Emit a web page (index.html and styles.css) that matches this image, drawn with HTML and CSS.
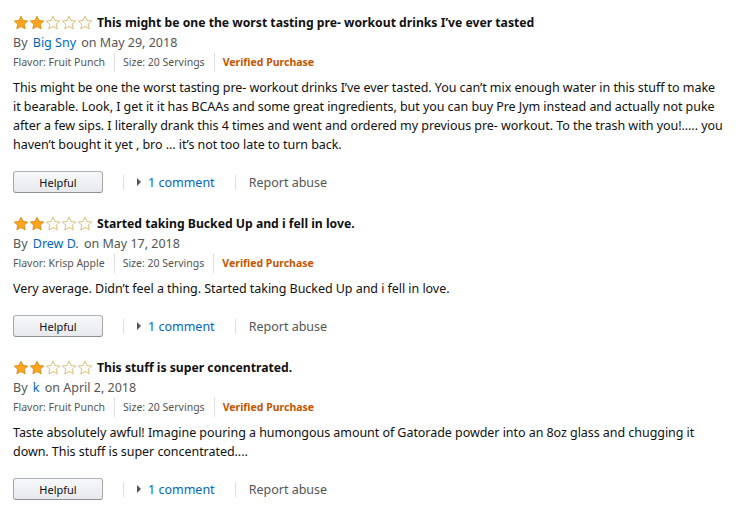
FILE: index.html
```html
<!DOCTYPE html>
<html lang="en">
<head>
  <meta charset="UTF-8">
  <title>Reviews</title>
  <link rel="stylesheet" href="styles.css">
</head>
<body>
  <div class="reviews">

    <div class="review">
      <div class="review-title">
        <span class="stars">
          <svg class="star full" viewBox="0 0 16 16"><path d="M8 1.2l2 4.3 4.7.5-3.5 3.2 1 4.6L8 11.5l-4.2 2.3 1-4.6L1.3 6l4.7-.5z"/></svg>
          <svg class="star full" viewBox="0 0 16 16"><path d="M8 1.2l2 4.3 4.7.5-3.5 3.2 1 4.6L8 11.5l-4.2 2.3 1-4.6L1.3 6l4.7-.5z"/></svg>
          <svg class="star" viewBox="0 0 16 16"><path d="M8 1.2l2 4.3 4.7.5-3.5 3.2 1 4.6L8 11.5l-4.2 2.3 1-4.6L1.3 6l4.7-.5z"/></svg>
          <svg class="star" viewBox="0 0 16 16"><path d="M8 1.2l2 4.3 4.7.5-3.5 3.2 1 4.6L8 11.5l-4.2 2.3 1-4.6L1.3 6l4.7-.5z"/></svg>
          <svg class="star" viewBox="0 0 16 16"><path d="M8 1.2l2 4.3 4.7.5-3.5 3.2 1 4.6L8 11.5l-4.2 2.3 1-4.6L1.3 6l4.7-.5z"/></svg>
        </span>
        <span class="title-text">This might be one the worst tasting pre- workout drinks I’ve ever tasted</span>
      </div>
      <div class="byline">By <a href="#">Big Sny</a> on May 29, 2018</div>
      <div class="meta">
        <span>Flavor: Fruit Punch</span>
        <span>Size: 20 Servings</span>
        <span class="verified">Verified Purchase</span>
      </div>
      <p class="body">This might be one the worst tasting pre- workout drinks I’ve ever tasted. You can’t mix enough water in this stuff to make it bearable. Look, I get it it has BCAAs and some great ingredients, but you can buy Pre Jym instead and actually not puke after a few sips. I literally drank this 4 times and went and ordered my previous pre- workout. To the trash with you!..... you haven’t bought it yet , bro ... it’s not too late to turn back.</p>
      <div class="actions">
        <button>Helpful</button>
        <span class="sep"></span>
        <a href="#" class="comments"><span class="arrow"></span>1 comment</a>
        <span class="sep"></span>
        <span class="report">Report abuse</span>
      </div>
    </div>

    <div class="review">
      <div class="review-title">
        <span class="stars">
          <svg class="star full" viewBox="0 0 16 16"><path d="M8 1.2l2 4.3 4.7.5-3.5 3.2 1 4.6L8 11.5l-4.2 2.3 1-4.6L1.3 6l4.7-.5z"/></svg>
          <svg class="star full" viewBox="0 0 16 16"><path d="M8 1.2l2 4.3 4.7.5-3.5 3.2 1 4.6L8 11.5l-4.2 2.3 1-4.6L1.3 6l4.7-.5z"/></svg>
          <svg class="star" viewBox="0 0 16 16"><path d="M8 1.2l2 4.3 4.7.5-3.5 3.2 1 4.6L8 11.5l-4.2 2.3 1-4.6L1.3 6l4.7-.5z"/></svg>
          <svg class="star" viewBox="0 0 16 16"><path d="M8 1.2l2 4.3 4.7.5-3.5 3.2 1 4.6L8 11.5l-4.2 2.3 1-4.6L1.3 6l4.7-.5z"/></svg>
          <svg class="star" viewBox="0 0 16 16"><path d="M8 1.2l2 4.3 4.7.5-3.5 3.2 1 4.6L8 11.5l-4.2 2.3 1-4.6L1.3 6l4.7-.5z"/></svg>
        </span>
        <span class="title-text">Started taking Bucked Up and i fell in love.</span>
      </div>
      <div class="byline">By <a href="#">Drew D.</a> on May 17, 2018</div>
      <div class="meta">
        <span>Flavor: Krisp Apple</span>
        <span>Size: 20 Servings</span>
        <span class="verified">Verified Purchase</span>
      </div>
      <p class="body">Very average. Didn’t feel a thing. Started taking Bucked Up and i fell in love.</p>
      <div class="actions">
        <button>Helpful</button>
        <span class="sep"></span>
        <a href="#" class="comments"><span class="arrow"></span>1 comment</a>
        <span class="sep"></span>
        <span class="report">Report abuse</span>
      </div>
    </div>

    <div class="review">
      <div class="review-title">
        <span class="stars">
          <svg class="star full" viewBox="0 0 16 16"><path d="M8 1.2l2 4.3 4.7.5-3.5 3.2 1 4.6L8 11.5l-4.2 2.3 1-4.6L1.3 6l4.7-.5z"/></svg>
          <svg class="star full" viewBox="0 0 16 16"><path d="M8 1.2l2 4.3 4.7.5-3.5 3.2 1 4.6L8 11.5l-4.2 2.3 1-4.6L1.3 6l4.7-.5z"/></svg>
          <svg class="star" viewBox="0 0 16 16"><path d="M8 1.2l2 4.3 4.7.5-3.5 3.2 1 4.6L8 11.5l-4.2 2.3 1-4.6L1.3 6l4.7-.5z"/></svg>
          <svg class="star" viewBox="0 0 16 16"><path d="M8 1.2l2 4.3 4.7.5-3.5 3.2 1 4.6L8 11.5l-4.2 2.3 1-4.6L1.3 6l4.7-.5z"/></svg>
          <svg class="star" viewBox="0 0 16 16"><path d="M8 1.2l2 4.3 4.7.5-3.5 3.2 1 4.6L8 11.5l-4.2 2.3 1-4.6L1.3 6l4.7-.5z"/></svg>
        </span>
        <span class="title-text">This stuff is super concentrated.</span>
      </div>
      <div class="byline">By <a href="#">k</a> on April 2, 2018</div>
      <div class="meta">
        <span>Flavor: Fruit Punch</span>
        <span>Size: 20 Servings</span>
        <span class="verified">Verified Purchase</span>
      </div>
      <p class="body">Taste absolutely awful! Imagine pouring a humongous amount of Gatorade powder into an 8oz glass and chugging it down. This stuff is super concentrated....</p>
      <div class="actions">
        <button>Helpful</button>
        <span class="sep"></span>
        <a href="#" class="comments"><span class="arrow"></span>1 comment</a>
        <span class="sep"></span>
        <span class="report">Report abuse</span>
      </div>
    </div>

  </div>
</body>
</html>
```

FILE: styles.css
```css
body {
  margin: 0;
  background: #fff;
  color: #111;
  font-family: 'Noto Sans', 'Open Sans', sans-serif;
  font-size: 12.5px;
}
a {
  color: #0066c0;
  text-decoration: none;
}
.reviews {
  padding: 12px 13px 0 13px;
  display: flex;
  flex-direction: column;
  gap: 20px;
}
.review-title {
  display: flex;
  align-items: center;
  height: 21px;
}
.stars {
  display: flex;
  margin-right: 4px;
}
.star {
  width: 16px;
  height: 16px;
  fill: #fff;
  stroke: #d8b46a;
  stroke-width: 0.9;
  stroke-linejoin: round;
}
.star.full {
  fill: #ffa41c;
  stroke: #d98b0e;
}
.title-text {
  font-weight: bold;
  font-size: 12.2px;
}
.byline {
  line-height: 20px;
  color: #555;
}
.byline a {
  margin: 0 2px;
}
.meta {
  display: flex;
  align-items: center;
  font-size: 10.5px;
  line-height: 19px;
  color: #555;
}
.meta span + span {
  border-left: 1px solid #ddd;
  margin-left: 9px;
  padding-left: 8px;
}
.meta .verified {
  color: #c45500;
  font-weight: bold;
}
.body {
  margin: 6px 0 0 0;
  line-height: 19px;
  letter-spacing: -0.05px;
  color: #111;
}
.actions {
  display: flex;
  align-items: center;
  margin-top: 17px;
  height: 22px;
}
button {
  width: 90px;
  height: 22px;
  font-family: inherit;
  font-size: 11px;
  color: #111;
  background: linear-gradient(#f7f8fa, #e7e9ec);
  border: 1px solid #adb1b8;
  border-color: #adb1b8 #a2a6ac #8d9096;
  border-radius: 3px;
  padding: 0;
  cursor: pointer;
}
.sep {
  width: 1px;
  height: 15px;
  background: #ddd;
  margin: 0 13px 0 20px;
}
.comments {
  display: flex;
  align-items: center;
}
.arrow {
  width: 0;
  height: 0;
  border-top: 4px solid transparent;
  border-bottom: 4px solid transparent;
  border-left: 4px solid #555;
  margin-right: 7px;
}
.report {
  color: #555;
}
```
